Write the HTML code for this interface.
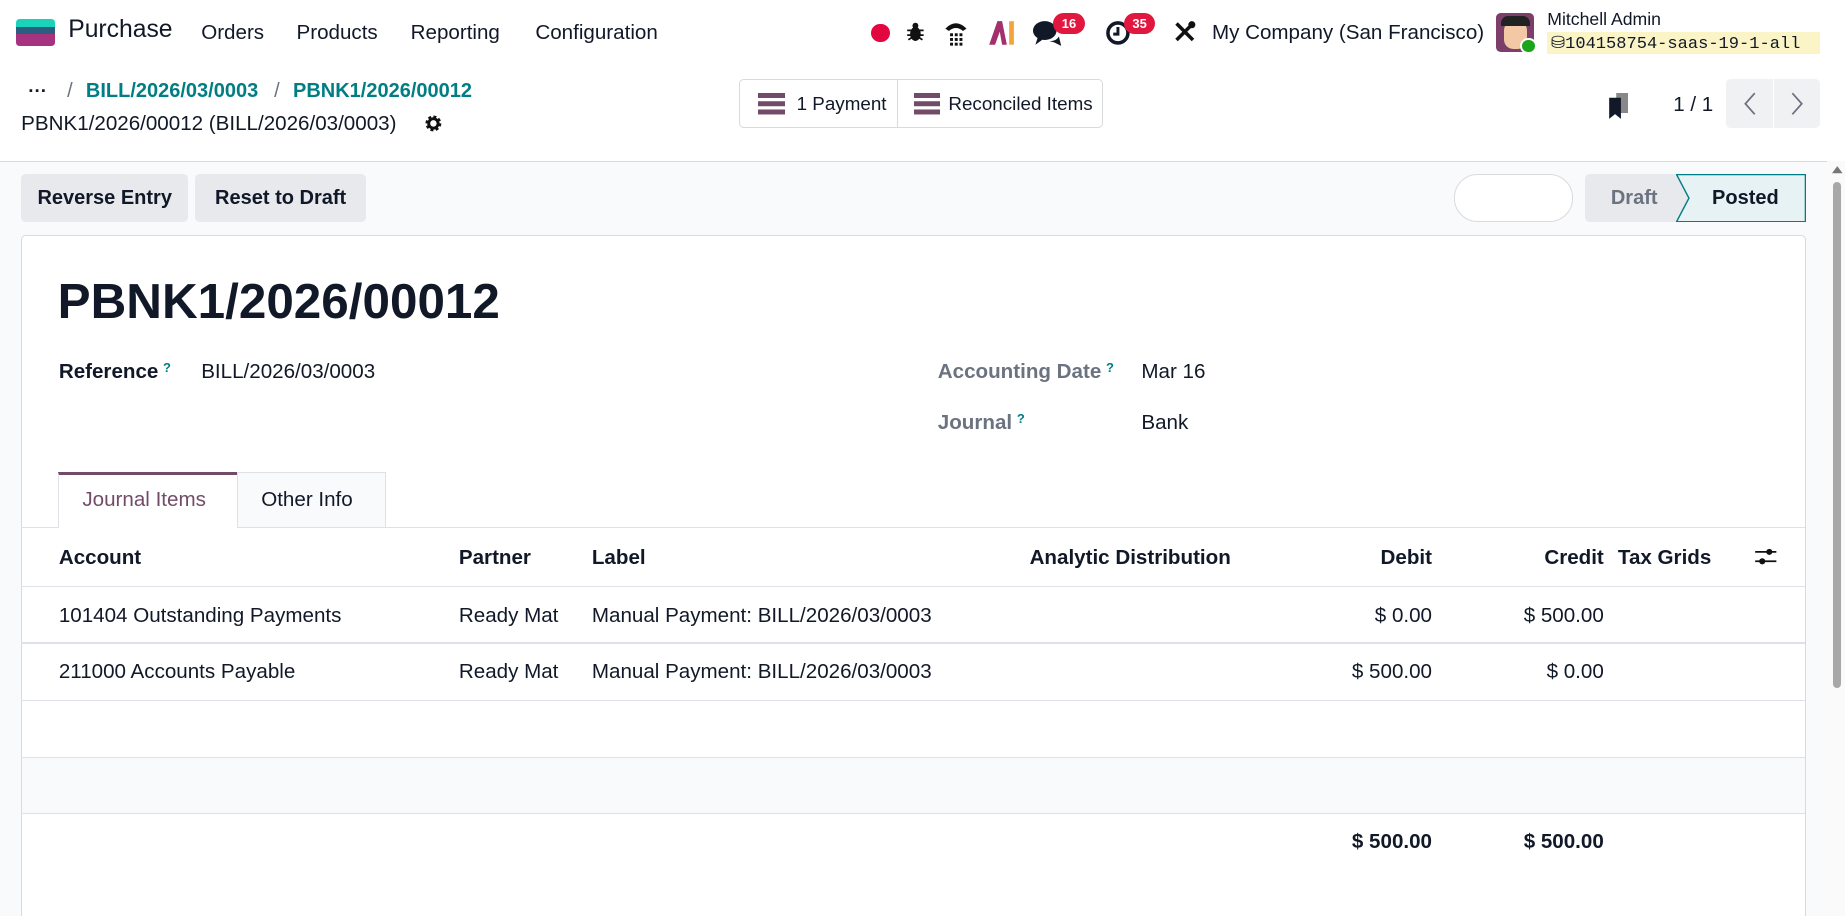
<!DOCTYPE html>
<html><head><meta charset="utf-8"><style>
*{box-sizing:border-box;margin:0;padding:0}
html,body{width:1845px;height:916px;overflow:hidden;background:#fff}
#z{zoom:1.17666;width:1568px;height:779px;position:relative;font-family:"Liberation Sans",sans-serif;color:#111827;font-size:17.5px}
.a{position:absolute;white-space:nowrap}
.b{font-weight:bold}
.teal{color:#017e84}
.gray{color:#6b7280}
.q{color:#017e84;font-size:11px;vertical-align:top;margin-left:4px}
.btn{position:absolute;background:#e7e9ed;border-radius:4px;font-weight:bold;font-size:17px;display:flex;align-items:center;justify-content:center}
.r{text-align:right}
.hl{position:absolute;left:18px;width:1516px;height:1px;background:#dee2e6}
.badge{position:absolute;background:#e2173f;color:#fff;font-size:11px;font-weight:bold;border-radius:9px;height:18px;min-width:27px;text-align:center;line-height:18px}
</style></head><body><div id="z">
<!-- navbar -->
<div class="a" style="left:14px;top:16px;width:33px;height:7px;background:#1ad3bb;border-radius:3px 3px 0 0"></div>
<div class="a" style="left:14px;top:23px;width:33px;height:6px;background:#2a5d7e"></div>
<div class="a" style="left:14px;top:29px;width:33px;height:10px;background:#a5337f;border-radius:0 0 3px 3px"></div>
<div class="a" style="left:58px;top:14px;font-size:21px">Purchase</div>
<div class="a" style="left:171px;top:18px;font-size:17.5px">Orders</div>
<div class="a" style="left:252px;top:18px;font-size:17.5px">Products</div>
<div class="a" style="left:349px;top:18px;font-size:17.5px">Reporting</div>
<div class="a" style="left:455px;top:18px;font-size:17.5px">Configuration</div>
<div class="a" style="left:740px;top:20px;width:16px;height:16px;border-radius:50%;background:#e2073f"></div>
<svg class="a" style="left:770px;top:18px" width="16" height="18" viewBox="0 0 16 18"><ellipse cx="8" cy="11" rx="4.5" ry="6" fill="#111"/><circle cx="8" cy="4" r="2.5" fill="#111"/><path d="M1 8h14M1 12h14M2 16l3-2M14 16l-3-2" stroke="#111" stroke-width="1.5"/></svg>
<svg class="a" style="left:801px;top:15px" width="22" height="24" viewBox="0 0 22 24"><path d="M2 9 Q11 0 20 9 L17 11 Q11 6 5 11Z" fill="#111"/><g fill="#111"><rect x="6" y="13" width="2.5" height="2.5"/><rect x="10" y="13" width="2.5" height="2.5"/><rect x="14" y="13" width="2.5" height="2.5"/><rect x="6" y="17" width="2.5" height="2.5"/><rect x="10" y="17" width="2.5" height="2.5"/><rect x="14" y="17" width="2.5" height="2.5"/><rect x="6" y="21" width="2.5" height="2.5"/><rect x="10" y="21" width="2.5" height="2.5"/><rect x="14" y="21" width="2.5" height="2.5"/></g></svg>
<svg class="a" style="left:840px;top:17px" width="24" height="22" viewBox="0 0 24 22"><path d="M1 21 L8 1 L12 1 L16 21 L12 21 L10 10 L6 21Z" fill="#a2306b"/><rect x="18" y="1" width="4" height="20" fill="#f3a43b"/></svg>
<svg class="a" style="left:878px;top:17px" width="26" height="24" viewBox="0 0 26 24"><ellipse cx="10" cy="9" rx="10" ry="8" fill="#111827"/><path d="M4 15 L2 21 L9 16Z" fill="#111827"/><path d="M14 18 Q20 18 22 14 L24 22 L18 19Z" fill="#111827"/></svg>
<div class="badge" style="left:895px;top:11px">16</div>
<svg class="a" style="left:939px;top:17px" width="22" height="22" viewBox="0 0 22 22"><circle cx="11" cy="11" r="8.5" fill="none" stroke="#111827" stroke-width="3"/><path d="M11 6v6h-4" stroke="#111827" stroke-width="2.5" fill="none"/></svg>
<div class="badge" style="left:955px;top:11px">35</div>
<svg class="a" style="left:997px;top:17px" width="20" height="20" viewBox="0 0 20 20"><path d="M3 3 L17 17 M17 3 L3 17" stroke="#111" stroke-width="3"/><circle cx="16" cy="4" r="3" fill="#111"/></svg>
<div class="a" style="left:1030px;top:18px;font-size:17.5px">My Company (San Francisco)</div>
<div class="a" style="left:1271px;top:11px;width:33px;height:33px;border-radius:4px;background:#7b3f6a;overflow:hidden"><div style="position:absolute;left:7px;top:7px;width:20px;height:24px;background:#f2c9a4;border-radius:8px"></div><div style="position:absolute;left:5px;top:3px;width:24px;height:8px;background:#222;border-radius:6px 6px 0 0"></div></div>
<div class="a" style="left:1292px;top:32px;width:14px;height:14px;border-radius:50%;background:#1ba51b;border:2px solid #fff"></div>
<div class="a" style="left:1315px;top:8px;font-size:15px">Mitchell Admin</div>
<div class="a" style="left:1315px;top:27px;width:232px;height:19px;background:#fbf4c7"></div>
<div class="a" style="left:1318px;top:28px;font-family:'Liberation Mono',monospace;font-size:14.5px">&#9921;104158754-saas-19-1-all</div>
<!-- control panel -->
<div class="a b" style="left:24px;top:68px;font-size:16px">···</div>
<div class="a gray" style="left:57px;top:68px;font-size:17px">/</div>
<div class="a teal b" style="left:73px;top:68px;font-size:17px">BILL/2026/03/0003</div>
<div class="a gray" style="left:233px;top:68px;font-size:17px">/</div>
<div class="a teal b" style="left:249px;top:68px;font-size:17px">PBNK1/2026/00012</div>
<div class="a" style="left:18px;top:95px;font-size:17.5px">PBNK1/2026/00012 (BILL/2026/03/0003)</div>
<svg class="a" style="left:360px;top:97px" width="16" height="16" viewBox="0 0 16 16"><circle cx="8" cy="8" r="5" fill="none" stroke="#111" stroke-width="3.5" stroke-dasharray="2.2 1.7"/><circle cx="8" cy="8" r="4" fill="none" stroke="#111" stroke-width="2.5"/></svg>
<div class="a" style="left:628px;top:67px;width:309px;height:42px;border:1px solid #d8dadd;border-radius:4px"></div>
<div class="a" style="left:762px;top:68px;width:1px;height:40px;background:#d8dadd"></div>
<div class="a" style="left:644px;top:79px;width:23px;height:4px;background:#714b67;box-shadow:0 7px #714b67,0 14px #714b67"></div>
<div class="a" style="left:677px;top:79px;font-size:16px">1 Payment</div>
<div class="a" style="left:777px;top:79px;width:22px;height:4px;background:#714b67;box-shadow:0 7px #714b67,0 14px #714b67"></div>
<div class="a" style="left:806px;top:79px;font-size:16px">Reconciled Items</div>
<svg class="a" style="left:1367px;top:79px" width="18" height="23" viewBox="0 0 18 23"><rect x="7" y="0" width="10" height="17" fill="#888"/><path d="M1 4h10v18l-5-4-5 4z" fill="#111827"/></svg>
<div class="a" style="left:1422px;top:79px;font-size:17.5px">1 / 1</div>
<div class="a" style="left:1467px;top:67px;width:80px;height:42px;background:#f0f1f3;border-radius:4px"></div>
<div class="a" style="left:1507px;top:67px;width:1px;height:42px;background:#fff"></div>
<svg class="a" style="left:1481px;top:78px" width="12" height="20" viewBox="0 0 12 20"><path d="M10 1 L2 10 L10 19" stroke="#6b7280" stroke-width="1.5" fill="none"/></svg>
<svg class="a" style="left:1521px;top:78px" width="12" height="20" viewBox="0 0 12 20"><path d="M2 1 L10 10 L2 19" stroke="#6b7280" stroke-width="1.5" fill="none"/></svg>
<!-- body bg -->
<div class="a" style="left:0;top:137px;width:1568px;height:642px;background:#f9fafb;border-top:1px solid #d8dadd"></div>
<div class="btn" style="left:18px;top:148px;width:142px;height:41px">Reverse Entry</div>
<div class="btn" style="left:166px;top:148px;width:145px;height:41px">Reset to Draft</div>
<div class="a" style="left:1236px;top:148px;width:101px;height:41px;border:1px solid #d8dadd;border-radius:20px;background:#fff"></div>
<div class="a" style="left:1347px;top:148px;width:88px;height:41px;background:#e7e9ed;border-radius:4px 0 0 4px"></div>
<div class="a b" style="left:1369px;top:159px;color:#6b7280;font-size:17px">Draft</div>
<svg class="a" style="left:1424px;top:148px" width="111" height="41" viewBox="0 0 111 41"><path d="M0.5 0.5 H110 V40.5 H0.5 L11 20.5Z" fill="#e6f2f3" stroke="#017e84" stroke-width="1.2"/></svg>
<div class="a b" style="left:1455px;top:159px;font-size:17px">Posted</div>
<!-- sheet -->
<div class="a" style="left:18px;top:200px;width:1517px;height:600px;background:#fff;border:1px solid #d8dadd;border-radius:4px"></div>
<div class="a b" style="left:49px;top:232px;font-size:42px">PBNK1/2026/00012</div>
<div class="a b" style="left:50px;top:306px">Reference<span class="q">?</span></div>
<div class="a" style="left:171px;top:306px">BILL/2026/03/0003</div>
<div class="a b gray" style="left:797px;top:306px">Accounting Date<span class="q">?</span></div>
<div class="a" style="left:970px;top:306px">Mar 16</div>
<div class="a b gray" style="left:797px;top:349px">Journal<span class="q">?</span></div>
<div class="a" style="left:970px;top:349px">Bank</div>
<!-- tabs -->
<div class="hl" style="top:448px"></div>
<div class="a" style="left:49px;top:401px;width:153px;height:48px;background:#fff;border:1px solid #dee2e6;border-bottom:none;border-top:3px solid #714b67"></div>
<div class="a" style="left:70px;top:415px;color:#714b67">Journal Items</div>
<div class="a" style="left:201px;top:401px;width:127px;height:47px;background:#f9fafb;border:1px solid #dee2e6;border-bottom:none"></div>
<div class="a" style="left:222px;top:415px">Other Info</div>
<!-- table -->
<div class="a b" style="left:50px;top:464px">Account</div>
<div class="a b" style="left:390px;top:464px">Partner</div>
<div class="a b" style="left:503px;top:464px">Label</div>
<div class="a b" style="left:875px;top:464px">Analytic Distribution</div>
<div class="a b r" style="right:351px;top:464px">Debit</div>
<div class="a b r" style="right:205px;top:464px">Credit</div>
<div class="a b" style="left:1375px;top:464px">Tax Grids</div>
<svg class="a" style="left:1491px;top:464px" width="20" height="18" viewBox="0 0 20 18"><path d="M1 5h18M1 13h18" stroke="#111" stroke-width="1.5"/><circle cx="13" cy="5" r="2.6" fill="#111"/><circle cx="7" cy="13" r="2.6" fill="#111"/></svg>
<div class="hl" style="top:498px"></div>
<div class="a" style="left:50px;top:513px">101404 Outstanding Payments</div>
<div class="a" style="left:390px;top:513px">Ready Mat</div>
<div class="a" style="left:503px;top:513px">Manual Payment: BILL/2026/03/0003</div>
<div class="a r" style="right:351px;top:513px">$ 0.00</div>
<div class="a r" style="right:205px;top:513px">$ 500.00</div>
<div class="hl" style="top:546px"></div>
<div class="a" style="left:50px;top:561px">211000 Accounts Payable</div>
<div class="a" style="left:390px;top:561px">Ready Mat</div>
<div class="a" style="left:503px;top:561px">Manual Payment: BILL/2026/03/0003</div>
<div class="a r" style="right:351px;top:561px">$ 500.00</div>
<div class="a r" style="right:205px;top:561px">$ 0.00</div>
<div class="hl" style="top:595px"></div>
<div class="a" style="left:19px;top:643px;width:1515px;height:48px;background:#f9fafb"></div>
<div class="hl" style="top:643px"></div>
<div class="hl" style="top:691px"></div>
<div class="a b r" style="right:351px;top:705px">$ 500.00</div>
<div class="a b r" style="right:205px;top:705px">$ 500.00</div>
<!-- scrollbar -->
<div class="a" style="left:1553px;top:137px;width:15px;height:642px;background:#fafafa"></div>
<div class="a" style="left:1558px;top:155px;width:7px;height:430px;background:#a8a8a8;border-radius:4px"></div>
<svg class="a" style="left:1557px;top:140px" width="9" height="8" viewBox="0 0 9 8"><path d="M0 7 L4.5 1 L9 7Z" fill="#777"/></svg>
</div></body></html>
